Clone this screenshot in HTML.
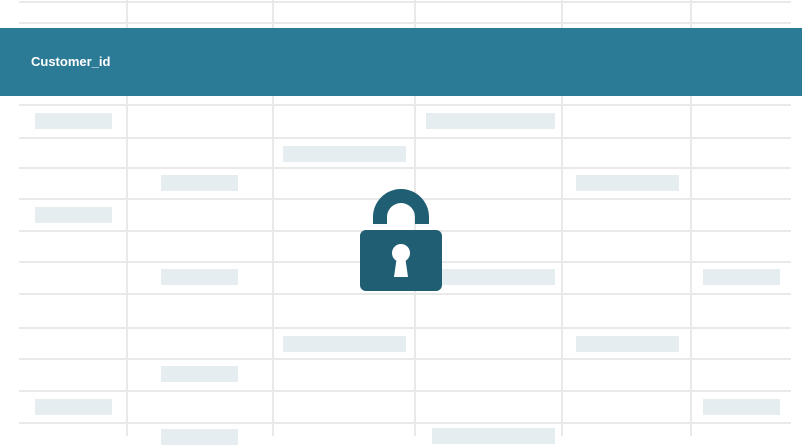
<!DOCTYPE html><html><head><style>
body{margin:0;width:802px;height:441px;overflow:hidden;background:#fff;position:relative;font-family:"Liberation Sans",sans-serif}
.h{position:absolute;left:19px;width:772px;height:1.5px;background:#e9e9e9}
.v{position:absolute;top:0;width:1.5px;height:436px;background:#e9e9e9}
.b{position:absolute;height:16px;background:#e6edf0}
.hd{position:absolute;left:0;top:28px;width:802px;height:68px;background:#2c7b96;color:#fff;font-weight:bold;font-size:13px;line-height:68px;padding-left:31px;box-sizing:border-box}
</style></head><body>
<div class="h" style="top:1px"></div><div class="h" style="top:22px"></div><div class="h" style="top:104px"></div><div class="h" style="top:137px"></div><div class="h" style="top:167px"></div><div class="h" style="top:198px"></div><div class="h" style="top:230px"></div><div class="h" style="top:261px"></div><div class="h" style="top:293px"></div><div class="h" style="top:327px"></div><div class="h" style="top:358px"></div><div class="h" style="top:390px"></div><div class="h" style="top:422px"></div>
<div class="v" style="left:126px"></div><div class="v" style="left:272px"></div><div class="v" style="left:414px"></div><div class="v" style="left:561px"></div><div class="v" style="left:690px"></div>
<div class="b" style="left:35px;width:77px;top:113px"></div><div class="b" style="left:426px;width:129px;top:113px"></div>
<div class="b" style="left:283px;width:123px;top:146px"></div>
<div class="b" style="left:161px;width:77px;top:175px"></div><div class="b" style="left:576px;width:103px;top:175px"></div>
<div class="b" style="left:35px;width:77px;top:207px"></div>
<div class="b" style="left:161px;width:77px;top:269px"></div><div class="b" style="left:426px;width:129px;top:269px"></div><div class="b" style="left:703px;width:77px;top:269px"></div>
<div class="b" style="left:283px;width:123px;top:336px"></div><div class="b" style="left:576px;width:103px;top:336px"></div>
<div class="b" style="left:161px;width:77px;top:366px"></div>
<div class="b" style="left:35px;width:77px;top:399px"></div><div class="b" style="left:703px;width:77px;top:399px"></div>
<div class="b" style="left:161px;width:77px;top:429px"></div><div class="b" style="left:432px;width:123px;top:428px"></div>
<div class="hd">Customer_id</div>
<svg style="position:absolute;left:0;top:0" width="802" height="441">
<path d="M373 224 V217 A28 28 0 0 1 429 217 V224 H415 V217 A14 14 0 0 0 387 217 V224 Z" fill="#1f5e73"/>
<rect x="360" y="230" width="82" height="61" rx="6" fill="#1f5e73"/>
<circle cx="401" cy="253" r="9" fill="#fff"/>
<path d="M397 256 L394 277 H408 L405 256 Z" fill="#fff"/>
</svg>
</body></html>
